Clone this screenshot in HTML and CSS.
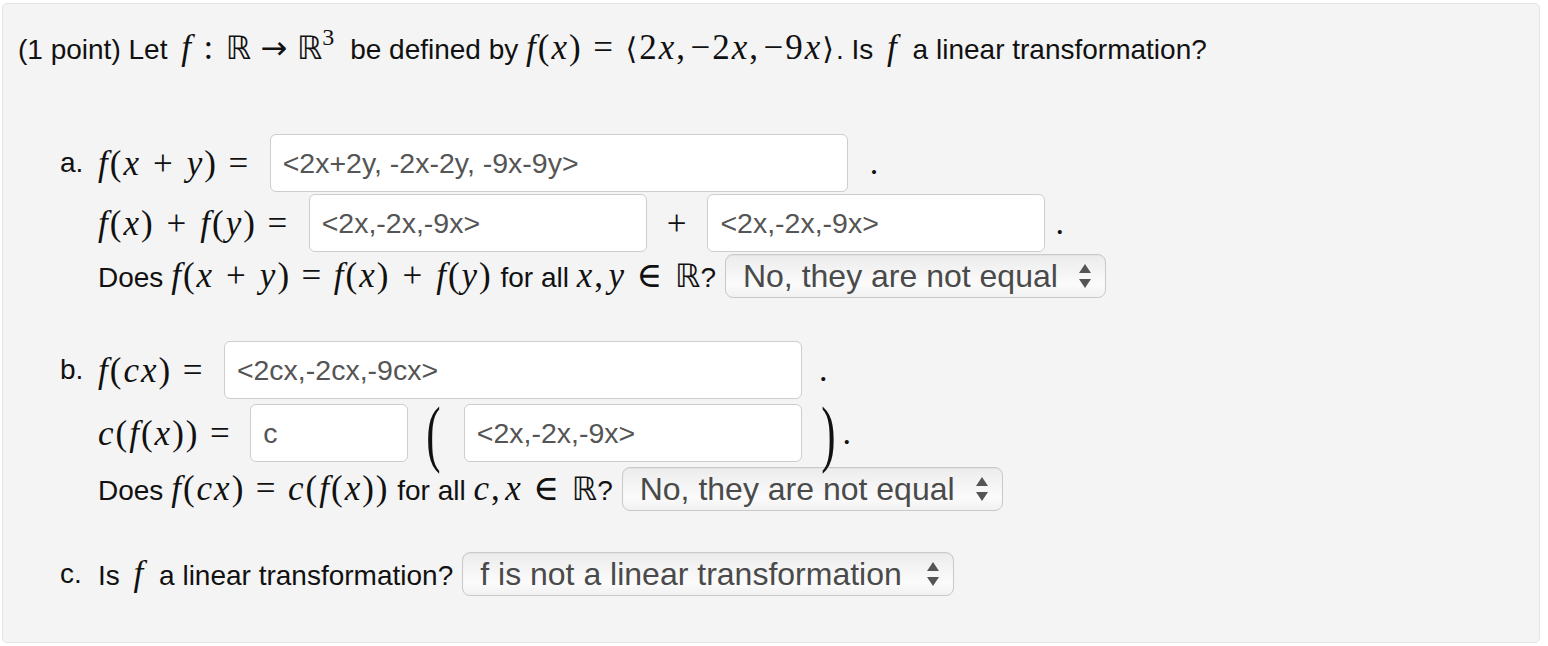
FILE: index.html
```html
<!DOCTYPE html>
<html lang="en">
<head>
    <meta charset="UTF-8">
    <title>Linear transformation</title>
    <link rel="stylesheet" href="styles.css">
</head>
<body>
    <div class="problem">
        <p class="intro">(1 point) Let <span class="m solo"><var>f</var><span class="rel">:</span><span class="bb">ℝ</span><span class="rel arrow">→</span><span class="bb">ℝ</span><sup>3</sup></span> be defined by <span class="m"><var>f</var>(<var>x</var>)<span class="rel">=</span><span class="ang">⟨</span>2<var>x</var>,<span class="thin"></span>−2<var>x</var>,<span class="thin"></span>−9<var>x</var><span class="ang">⟩</span></span>. Is <span class="m solo"><var>f</var></span> a linear transformation?</p>

        <div class="part part-a">
            <div class="row">
                <span class="label">a.</span>
                <span class="m"><var>f</var>(<var>x</var><span class="bin">+</span><var>y</var>)<span class="rel">=</span></span>
                <input class="answer w-full" type="text" value="&lt;2x+2y, -2x-2y, -9x-9y&gt;" readonly>
                <span class="dot dot-a1">.</span>
            </div>
            <div class="row indent">
                <span class="m"><var>f</var>(<var>x</var>)<span class="bin">+</span><var>f</var>(<var>y</var>)<span class="rel">=</span></span>
                <input class="answer w-mid" type="text" value="&lt;2x,-2x,-9x&gt;" readonly>
                <span class="m plus">+</span>
                <input class="answer w-mid" type="text" value="&lt;2x,-2x,-9x&gt;" readonly>
                <span class="dot dot-a2">.</span>
            </div>
            <div class="row row-q indent">
                <span>Does <span class="m"><var>f</var>(<var>x</var><span class="bin">+</span><var>y</var>)<span class="rel">=</span><var>f</var>(<var>x</var>)<span class="bin">+</span><var>f</var>(<var>y</var>)</span> for all <span class="m"><var>x</var>,<span class="thin"></span><var>y</var><span class="rel">∈</span><span class="bb">ℝ</span></span>?</span>
                <span class="dropdown">
                    <span>No, they are not equal</span>
                    <svg class="arrows" width="14" height="26" viewBox="0 0 14 26"><path d="M7 1 L13 10 L1 10 Z M1 16 L13 16 L7 25 Z" fill="#555"/></svg>
                </span>
            </div>
        </div>

        <div class="part part-b">
            <div class="row">
                <span class="label">b.</span>
                <span class="m"><var>f</var>(<var>cx</var>)<span class="rel">=</span></span>
                <input class="answer w-full" type="text" value="&lt;2cx,-2cx,-9cx&gt;" readonly>
                <span class="dot dot-b1">.</span>
            </div>
            <div class="row row-paren indent">
                <span class="m"><var>c</var>(<var>f</var>(<var>x</var>))<span class="rel">=</span></span>
                <input class="answer w-small" type="text" value="c" readonly>
                <span class="paren paren-open">(</span>
                <input class="answer w-mid" type="text" value="&lt;2x,-2x,-9x&gt;" readonly>
                <span class="paren paren-close">)</span>
                <span class="dot dot-b2">.</span>
            </div>
            <div class="row row-q indent">
                <span>Does <span class="m"><var>f</var>(<var>cx</var>)<span class="rel">=</span><var>c</var>(<var>f</var>(<var>x</var>))</span> for all <span class="m"><var>c</var>,<span class="thin"></span><var>x</var><span class="rel">∈</span><span class="bb">ℝ</span></span>?</span>
                <span class="dropdown">
                    <span>No, they are not equal</span>
                    <svg class="arrows" width="14" height="26" viewBox="0 0 14 26"><path d="M7 1 L13 10 L1 10 Z M1 16 L13 16 L7 25 Z" fill="#555"/></svg>
                </span>
            </div>
        </div>

        <div class="part part-c">
            <div class="row row-q">
                <span class="label">c.</span>
                <span>Is <span class="m solo"><var>f</var></span> a linear transformation?</span>
                <span class="dropdown dropdown-wide">
                    <span>f is not a linear transformation</span>
                    <svg class="arrows" width="14" height="26" viewBox="0 0 14 26"><path d="M7 1 L13 10 L1 10 Z M1 16 L13 16 L7 25 Z" fill="#555"/></svg>
                </span>
            </div>
        </div>
    </div>
</body>
</html>
```

FILE: styles.css
```css
body {
    margin: 0;
    background: #fff;
    font-family: "Liberation Sans", Arial, sans-serif;
    font-size: 28px;
    color: #111;
}

.problem {
    margin: 3px 8px 3px 2px;
    padding: 26px 15px 46px;
    background: #f4f4f4;
    border: 1px solid #e3e3e3;
    border-radius: 5px;
}

.intro {
    margin: 0;
    line-height: 34px;
    white-space: nowrap;
}

/* math */
.m {
    font-family: "Liberation Serif", "DejaVu Serif", serif;
    font-size: 35px;
    line-height: 1;
    letter-spacing: 2px;
    white-space: nowrap;
}

.m var {
    font-style: italic;
}

.m sup {
    font-size: 24px;
    vertical-align: 14px;
    line-height: 0;
}

.solo {
    margin: 0 6px;
}

.rel {
    margin: 0 0.3em;
}

.bin {
    margin: 0 12px;
}

.thin {
    margin-left: 0.1em;
}

.bb {
    font-family: "DejaVu Sans", sans-serif;
    font-size: 32px;
    letter-spacing: 0;
}

.arrow {
    font-family: "DejaVu Sans", sans-serif;
    font-size: 32px;
    letter-spacing: 0;
}

.ang {
    font-family: "DejaVu Sans", sans-serif;
    font-size: 30px;
}

/* parts */
.part {
    margin-left: 42px;
}

.part-a {
    margin-top: 67px;
}

.part-b {
    margin-top: 43px;
}

.part-c {
    margin-top: 41px;
}

.row {
    display: flex;
    align-items: center;
    height: 58px;
    margin-top: 2px;
    white-space: nowrap;
}

.part > .row:first-child {
    margin-top: 0;
}

.row-q {
    height: 44px;
}

.part-b .row + .row {
    margin-top: 5px;
}

.label {
    width: 38px;
}

.indent {
    padding-left: 38px;
}

.answer {
    height: 58px;
    box-sizing: border-box;
    margin: 0 0 0 9px;
    padding: 0 12px;
    border: 1px solid #cdcdcd;
    border-radius: 6px;
    background: #fff;
    font-family: "Liberation Sans", Arial, sans-serif;
    font-size: 28.5px;
    color: #555;
    outline: none;
}

.w-full {
    width: 578px;
}

.w-mid {
    width: 338px;
}

.w-small {
    width: 158px;
    margin-left: 8px;
}

.plus {
    margin: 0 21px 0 20px;
    letter-spacing: 0;
}

.plus + .answer {
    margin-left: 0;
}

.dot {
    font-family: "Liberation Serif", serif;
    font-size: 34px;
}

.dot-a1 {
    margin-left: 22px;
}

.dot-a2 {
    margin-left: 10px;
}

.dot-b1 {
    margin-left: 17px;
}

.dot-b2 {
    margin-left: 2px;
}

.paren {
    font-family: "Liberation Serif", serif;
    font-size: 74px;
    line-height: 58px;
    transform: scaleX(0.58);
}

.paren-open {
    margin: 0 18px 0 13px;
}

.paren-open + .answer {
    margin-left: 0;
}

.paren-close {
    margin-left: 14px;
}

/* select boxes */
.dropdown {
    display: flex;
    align-items: center;
    justify-content: space-between;
    box-sizing: border-box;
    width: 381px;
    height: 44px;
    margin-left: 9px;
    padding: 0 13px 0 17px;
    border: 1px solid #c9c9c9;
    border-radius: 8px;
    background: linear-gradient(#ececec, #fbfbfb 70%, #f1f1f1);
    box-shadow: inset 0 1px 1px rgba(0, 0, 0, 0.04);
    font-size: 32px;
    color: #4a4a4a;
}

.dropdown-wide {
    width: 492px;
}
```
